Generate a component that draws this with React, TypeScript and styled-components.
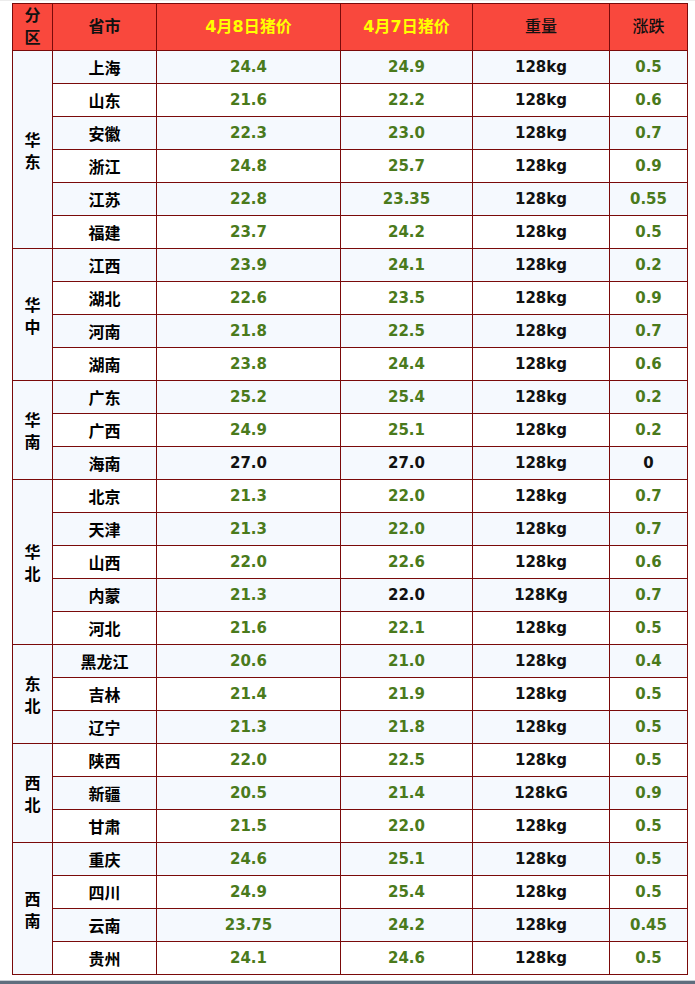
import * as React from 'react';
import styled, { createGlobalStyle } from 'styled-components';

const GlobalStyle = createGlobalStyle`
  html, body {
    margin: 0;
    padding: 0;
    background: #ffffff;
  }
  body {
    font-family: "DejaVu Sans", "Noto Sans CJK SC", sans-serif;
    color: #000;
  }
`;

const Page = styled.div`
  width: 695px;
  height: 984px;
  box-sizing: border-box;
  margin: 0;
  padding: 2px 0 0 12px;
  border-top: 1px solid #ececec;
  display: flex;
  flex-direction: column;
  position: relative;
`;

const PriceTable = styled.table`
  width: 675px;
  border-collapse: collapse;
  table-layout: fixed;
`;

const HeadCell = styled.th<{ $accent?: boolean; $light?: boolean }>`
  height: 46px;
  padding: 0;
  background: #f9483d;
  border: 1px solid #7a0a0a;
  font-family: "DejaVu Sans", "Noto Sans CJK SC", sans-serif;
  font-size: 16px;
  line-height: 22px;
  font-weight: ${(p) => (p.$light ? 500 : 700)};
  color: ${(p) => (p.$accent ? '#ffff00' : '#111')};
  text-align: center;
  vertical-align: middle;
`;

const Row = styled.tr<{ $shade: boolean }>`
  height: 33px;
  background: ${(p) => (p.$shade ? '#f5f9fe' : '#ffffff')};
`;

const RegionCell = styled.td`
  padding: 0;
  background: #f5f9fe;
  border: 1px solid #7a0a0a;
  font-family: "Noto Sans CJK SC", sans-serif;
  font-size: 16px;
  line-height: 22px;
  font-weight: 700;
  text-align: center;
  vertical-align: middle;
`;

const NameCell = styled.td`
  padding: 0;
  border: 1px solid #7a0a0a;
  font-family: "Noto Sans CJK SC", sans-serif;
  font-size: 16px;
  font-weight: 700;
  text-align: center;
  vertical-align: middle;
`;

const NumCell = styled.td<{ $plain?: boolean }>`
  padding: 0;
  border: 1px solid #7a0a0a;
  font-family: "DejaVu Sans", sans-serif;
  font-size: 15px;
  font-weight: 700;
  color: ${(p) => (p.$plain ? '#111' : '#4a7a1c')};
  text-align: center;
  vertical-align: middle;
`;

const BottomBar = styled.div`
  position: absolute;
  left: 0;
  right: 0;
  bottom: 0;
  height: 3px;
  background: #5f6e7e;
  border-top: 1px solid #c9ced4;
`;

type Item = {
  name: string;
  today: string;
  prev: string;
  weight?: string;
  diff: string;
  plain?: ('today' | 'prev' | 'diff')[];
};

type Region = { name: string; items: Item[] };

const regions: Region[] = [
  {
    name: '华东',
    items: [
      { name: '上海', today: '24.4', prev: '24.9', diff: '0.5' },
      { name: '山东', today: '21.6', prev: '22.2', diff: '0.6' },
      { name: '安徽', today: '22.3', prev: '23.0', diff: '0.7' },
      { name: '浙江', today: '24.8', prev: '25.7', diff: '0.9' },
      { name: '江苏', today: '22.8', prev: '23.35', diff: '0.55' },
      { name: '福建', today: '23.7', prev: '24.2', diff: '0.5' },
    ],
  },
  {
    name: '华中',
    items: [
      { name: '江西', today: '23.9', prev: '24.1', diff: '0.2' },
      { name: '湖北', today: '22.6', prev: '23.5', diff: '0.9' },
      { name: '河南', today: '21.8', prev: '22.5', diff: '0.7' },
      { name: '湖南', today: '23.8', prev: '24.4', diff: '0.6' },
    ],
  },
  {
    name: '华南',
    items: [
      { name: '广东', today: '25.2', prev: '25.4', diff: '0.2' },
      { name: '广西', today: '24.9', prev: '25.1', diff: '0.2' },
      { name: '海南', today: '27.0', prev: '27.0', diff: '0', plain: ['today', 'prev', 'diff'] },
    ],
  },
  {
    name: '华北',
    items: [
      { name: '北京', today: '21.3', prev: '22.0', diff: '0.7' },
      { name: '天津', today: '21.3', prev: '22.0', diff: '0.7' },
      { name: '山西', today: '22.0', prev: '22.6', diff: '0.6' },
      { name: '内蒙', today: '21.3', prev: '22.0', weight: '128Kg', diff: '0.7', plain: ['prev'] },
      { name: '河北', today: '21.6', prev: '22.1', diff: '0.5' },
    ],
  },
  {
    name: '东北',
    items: [
      { name: '黑龙江', today: '20.6', prev: '21.0', diff: '0.4' },
      { name: '吉林', today: '21.4', prev: '21.9', diff: '0.5' },
      { name: '辽宁', today: '21.3', prev: '21.8', diff: '0.5' },
    ],
  },
  {
    name: '西北',
    items: [
      { name: '陕西', today: '22.0', prev: '22.5', diff: '0.5' },
      { name: '新疆', today: '20.5', prev: '21.4', weight: '128kG', diff: '0.9' },
      { name: '甘肃', today: '21.5', prev: '22.0', diff: '0.5' },
    ],
  },
  {
    name: '西南',
    items: [
      { name: '重庆', today: '24.6', prev: '25.1', diff: '0.5' },
      { name: '四川', today: '24.9', prev: '25.4', diff: '0.5' },
      { name: '云南', today: '23.75', prev: '24.2', diff: '0.45' },
      { name: '贵州', today: '24.1', prev: '24.6', diff: '0.5' },
    ],
  },
];

function Stacked({ text }: { text: string }) {
  return (
    <>
      {text.split('').map((ch, i) => (
        <React.Fragment key={i}>
          {i > 0 && <br />}
          {ch}
        </React.Fragment>
      ))}
    </>
  );
}

export default function App(): JSX.Element {
  let index = 0;
  return (
    <Page>
      <GlobalStyle />
      <PriceTable>
        <colgroup>
          <col style={{ width: 40 }} />
          <col style={{ width: 104 }} />
          <col style={{ width: 184 }} />
          <col style={{ width: 132 }} />
          <col style={{ width: 137 }} />
          <col style={{ width: 78 }} />
        </colgroup>
        <thead>
          <tr>
            <HeadCell>
              <Stacked text="分区" />
            </HeadCell>
            <HeadCell>省市</HeadCell>
            <HeadCell $accent>4月8日猪价</HeadCell>
            <HeadCell $accent>4月7日猪价</HeadCell>
            <HeadCell $light>重量</HeadCell>
            <HeadCell $light>涨跌</HeadCell>
          </tr>
        </thead>
        <tbody>
          {regions.map((region) =>
            region.items.map((item, i) => {
              index += 1;
              const plain = item.plain ?? [];
              return (
                <Row key={item.name} $shade={index % 2 === 1}>
                  {i === 0 && (
                    <RegionCell rowSpan={region.items.length}>
                      <Stacked text={region.name} />
                    </RegionCell>
                  )}
                  <NameCell>{item.name}</NameCell>
                  <NumCell $plain={plain.includes('today')}>{item.today}</NumCell>
                  <NumCell $plain={plain.includes('prev')}>{item.prev}</NumCell>
                  <NumCell $plain>{item.weight ?? '128kg'}</NumCell>
                  <NumCell $plain={plain.includes('diff')}>{item.diff}</NumCell>
                </Row>
              );
            })
          )}
        </tbody>
      </PriceTable>
      <BottomBar />
    </Page>
  );
}
